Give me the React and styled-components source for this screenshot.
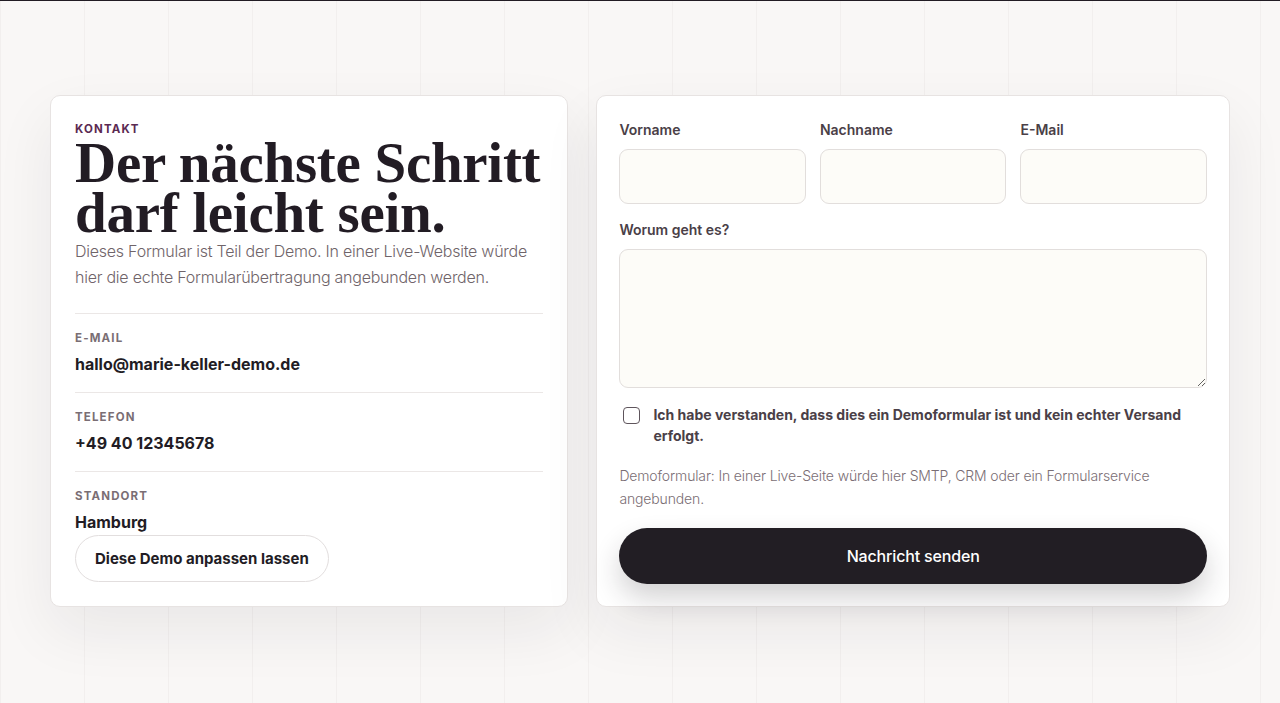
import styled, { createGlobalStyle } from "styled-components";

const GlobalStyle = createGlobalStyle`
  * {
    box-sizing: border-box;
  }
  body {
    margin: 0;
    font-family: Inter, "Noto Sans", sans-serif;
    color: #221c24;
    background: #f8f6f5;
  }
`;

const Page = styled.div`
  min-height: 703px;
  border-top: 1px solid #221c24;
  background-color: #f9f7f6;
  background-image: linear-gradient(to right, #f2efee 1px, transparent 1px);
  background-size: 84px 100%;
  background-position: 84px 0;
  padding: 94px 50px 60px;
`;

const Layout = styled.div`
  display: grid;
  grid-template-columns: minmax(0, 0.9fr) minmax(0, 1.1fr);
  gap: 28px;
  align-items: stretch;
`;

const Card = styled.div`
  background: #fff;
  border: 1px solid #e7e3e2;
  border-radius: 10px;
  box-shadow: 0 24px 60px rgba(34, 28, 36, 0.07);
  padding: ${(props) => (props.$tight ? "22px" : "24px")};
`;

const Eyebrow = styled.div`
  font-size: 11.5px;
  line-height: 18px;
  font-weight: 700;
  letter-spacing: 0.1em;
  text-transform: uppercase;
  color: #5b2a52;
`;

const Heading = styled.h1`
  margin: 0;
  font-family: "Liberation Serif", "DejaVu Serif", serif;
  font-weight: 700;
  font-size: 57px;
  line-height: 50px;
  letter-spacing: -0.005em;
  color: #221c24;
`;

const Lead = styled.p`
  margin: 0;
  font-size: 16px;
  line-height: 26px;
  font-weight: 300;
  letter-spacing: -0.015em;
  color: #6f6469;
`;

const InfoList = styled.div`
  margin-top: 23px;
`;

const InfoItem = styled.div`
  border-top: 1px solid #ebe7e6;
  padding: 16px 0;
  &:last-child {
    padding-bottom: 0;
  }
`;

const InfoLabel = styled.div`
  font-size: 11.5px;
  line-height: 16px;
  font-weight: 700;
  letter-spacing: 0.1em;
  text-transform: uppercase;
  color: #7a6e74;
  margin-bottom: 6px;
`;

const InfoValue = styled.div`
  font-size: 16px;
  line-height: 24px;
  font-weight: 700;
  color: #221c24;
`;

const GhostButton = styled.button`
  margin-top: 1px;
  height: 47px;
  padding: 0 19px;
  border: 1px solid #e2dede;
  border-radius: 999px;
  background: #fff;
  font-family: inherit;
  font-size: 15px;
  font-weight: 700;
  color: #221c24;
`;

const Form = styled.form`
  display: flex;
  flex-direction: column;
`;

const FieldRow = styled.div`
  display: grid;
  grid-template-columns: repeat(3, minmax(0, 1fr));
  gap: 14px;
  margin-bottom: 14px;
`;

const Field = styled.label`
  display: flex;
  flex-direction: column;
  gap: 7px;
  min-width: 0;
`;

const FieldLabel = styled.span`
  font-size: 14px;
  line-height: 24px;
  font-weight: 600;
  color: #4a4047;
`;

const Input = styled.input`
  width: 100%;
  min-width: 0;
  height: 55px;
  border: 1px solid #e2dedc;
  border-radius: 9px;
  background: #fdfcf8;
  font-family: inherit;
  font-size: 15px;
  padding: 0 14px;
  outline: none;
`;

const TextArea = styled.textarea`
  width: 100%;
  height: 139px;
  border: 1px solid #e2dedc;
  border-radius: 9px;
  background: #fdfcf8;
  font-family: inherit;
  font-size: 15px;
  padding: 12px 14px;
  outline: none;
`;

const Consent = styled.label`
  display: flex;
  align-items: flex-start;
  gap: 13px;
  margin-top: 16px;
  font-size: 14px;
  line-height: 21px;
  font-weight: 700;
  color: #4a4047;
`;

const Checkbox = styled.input`
  appearance: none;
  flex: none;
  width: 17px;
  height: 17px;
  margin: 3px 0 0 4px;
  border: 1px solid #5f555c;
  border-radius: 4px;
  background: #fff;
`;

const Note = styled.p`
  margin: 18px 0 0;
  font-size: 14px;
  line-height: 23px;
  font-weight: 300;
  letter-spacing: -0.01em;
  color: #7a6e74;
`;

const SubmitButton = styled.button`
  margin-top: 18px;
  height: 56px;
  border: none;
  border-radius: 999px;
  background: #221e24;
  color: #fff;
  font-family: inherit;
  font-size: 16px;
  font-weight: 500;
  letter-spacing: -0.01em;
  box-shadow: 0 14px 28px rgba(34, 28, 36, 0.2);
`;

const contacts = [
  { label: "E-Mail", value: "hallo@marie-keller-demo.de" },
  { label: "Telefon", value: "+49 40 12345678" },
  { label: "Standort", value: "Hamburg" },
];

export default function App() {
  return (
    <>
      <GlobalStyle />
      <Page>
        <Layout>
          <Card>
            <Eyebrow>Kontakt</Eyebrow>
            <Heading>
              Der nächste Schritt
              <br />
              darf leicht sein.
            </Heading>
            <Lead>
              Dieses Formular ist Teil der Demo. In einer Live-Website würde
              hier die echte Formularübertragung angebunden werden.
            </Lead>
            <InfoList>
              {contacts.map((item) => (
                <InfoItem key={item.label}>
                  <InfoLabel>{item.label}</InfoLabel>
                  <InfoValue>{item.value}</InfoValue>
                </InfoItem>
              ))}
            </InfoList>
            <GhostButton type="button">Diese Demo anpassen lassen</GhostButton>
          </Card>
          <Card $tight>
            <Form onSubmit={(e) => e.preventDefault()}>
              <FieldRow>
                <Field>
                  <FieldLabel>Vorname</FieldLabel>
                  <Input type="text" />
                </Field>
                <Field>
                  <FieldLabel>Nachname</FieldLabel>
                  <Input type="text" />
                </Field>
                <Field>
                  <FieldLabel>E-Mail</FieldLabel>
                  <Input type="email" />
                </Field>
              </FieldRow>
              <Field>
                <FieldLabel>Worum geht es?</FieldLabel>
                <TextArea />
              </Field>
              <Consent>
                <Checkbox type="checkbox" />
                <span>
                  Ich habe verstanden, dass dies ein Demoformular ist und kein
                  echter Versand erfolgt.
                </span>
              </Consent>
              <Note>
                Demoformular: In einer Live-Seite würde hier SMTP, CRM oder ein
                Formularservice angebunden.
              </Note>
              <SubmitButton type="submit">Nachricht senden</SubmitButton>
            </Form>
          </Card>
        </Layout>
      </Page>
    </>
  );
}
